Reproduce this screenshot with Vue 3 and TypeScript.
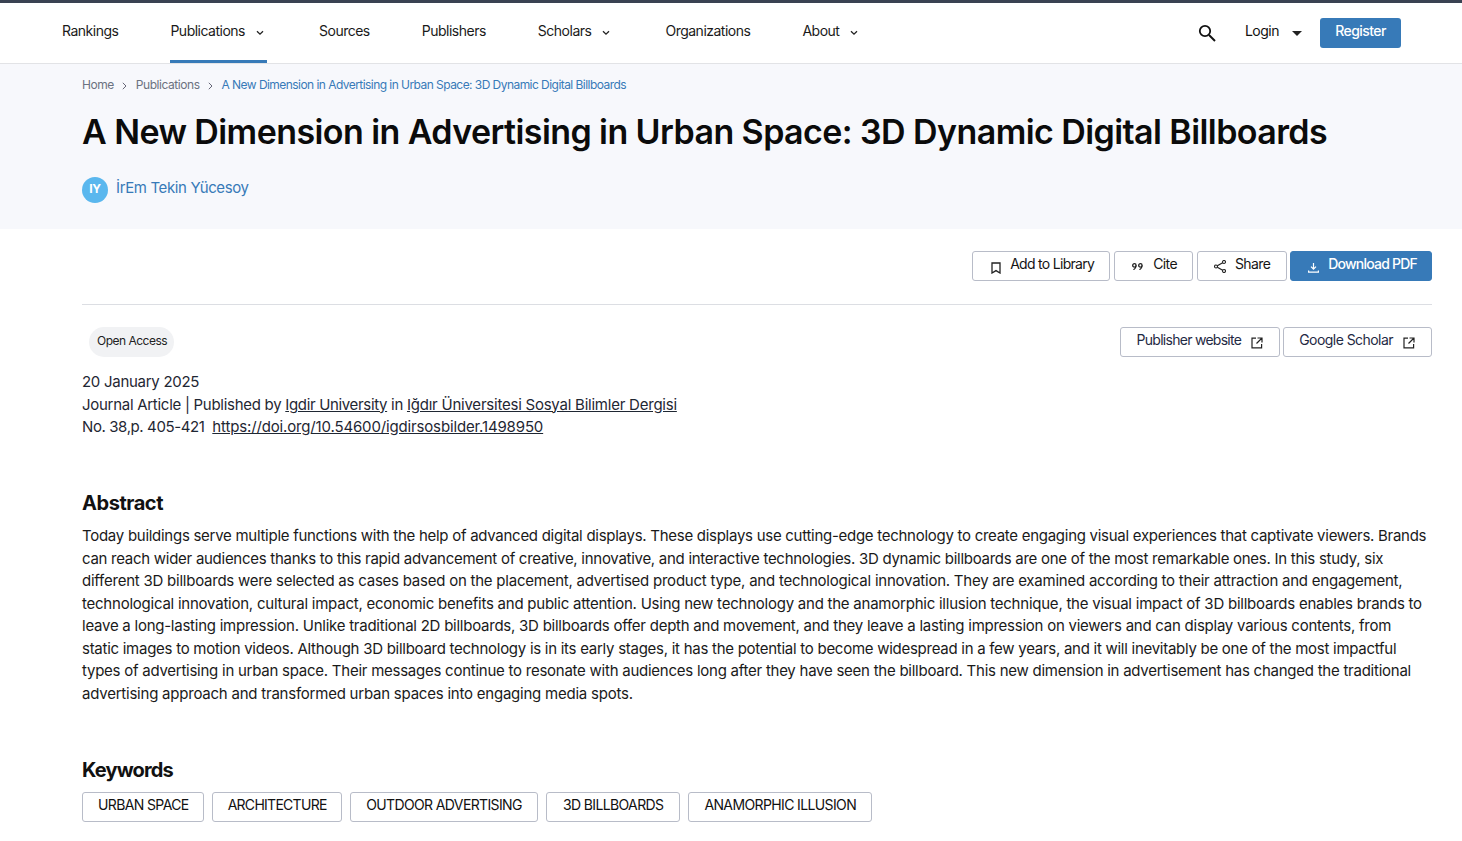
<script setup lang="ts">
const navItems = [
  { label: 'Rankings', caret: false, active: false },
  { label: 'Publications', caret: true, active: true },
  { label: 'Sources', caret: false, active: false },
  { label: 'Publishers', caret: false, active: false },
  { label: 'Scholars', caret: true, active: false },
  { label: 'Organizations', caret: false, active: false },
  { label: 'About', caret: true, active: false },
]
const keywords = ['URBAN SPACE', 'ARCHITECTURE', 'OUTDOOR ADVERTISING', '3D BILLBOARDS', 'ANAMORPHIC ILLUSION']
const abstractLines = [
  { ls: -0.276, text: 'Today buildings serve multiple functions with the help of advanced digital displays. These displays use cutting-edge technology to create engaging visual experiences that captivate viewers. Brands' },
  { ls: -0.276, text: 'can reach wider audiences thanks to this rapid advancement of creative, innovative, and interactive technologies. 3D dynamic billboards are one of the most remarkable ones. In this study, six' },
  { ls: -0.234, text: 'different 3D billboards were selected as cases based on the placement, advertised product type, and technological innovation. They are examined according to their attraction and engagement,' },
  { ls: -0.235, text: 'technological innovation, cultural impact, economic benefits and public attention. Using new technology and the anamorphic illusion technique, the visual impact of 3D billboards enables brands to' },
  { ls: -0.245, text: 'leave a long-lasting impression. Unlike traditional 2D billboards, 3D billboards offer depth and movement, and they leave a lasting impression on viewers and can display various contents, from' },
  { ls: -0.27, text: 'static images to motion videos. Although 3D billboard technology is in its early stages, it has the potential to become widespread in a few years, and it will inevitably be one of the most impactful' },
  { ls: -0.25, text: 'types of advertising in urban space. Their messages continue to resonate with audiences long after they have seen the billboard. This new dimension in advertisement has changed the traditional' },
  { ls: -0.225, text: 'advertising approach and transformed urban spaces into engaging media spots.' },
]
</script>

<template>
  <div class="page">
    <header class="header">
      <nav class="nav">
        <a v-for="item in navItems" :key="item.label" class="nav-item" :class="{ active: item.active }">
          <span>{{ item.label }}</span>
          <svg v-if="item.caret" class="chev" width="8" height="6" viewBox="0 0 8 6"><path d="M1 1.2 4 4.2 7 1.2" fill="none" stroke="#222" stroke-width="1.3" /></svg>
        </a>
      </nav>
      <div class="head-right">
        <svg class="search" width="18" height="18" viewBox="0 0 18 18"><circle cx="7" cy="7" r="5.2" fill="none" stroke="#111" stroke-width="1.8" /><path d="M11 11l6 6" stroke="#111" stroke-width="2" /></svg>
        <span class="login">Login</span>
        <svg class="login-caret" width="10" height="5" viewBox="0 0 10 5"><path d="M0 0h10L5 5z" fill="#222" /></svg>
        <button class="register">Register</button>
      </div>
    </header>

    <section class="hero">
      <div class="crumbs">
        <span>Home</span>
        <svg width="5" height="8" viewBox="0 0 5 8"><path d="M.8.8 4 4 .8 7.2" fill="none" stroke="#667" stroke-width="1" /></svg>
        <span>Publications</span>
        <svg width="5" height="8" viewBox="0 0 5 8"><path d="M.8.8 4 4 .8 7.2" fill="none" stroke="#667" stroke-width="1" /></svg>
        <span class="crumb-current">A New Dimension in Advertising in Urban Space: 3D Dynamic Digital Billboards</span>
      </div>
      <h1>A New Dimension in Advertising in Urban Space: 3D Dynamic Digital Billboards</h1>
      <div class="author">
        <span class="avatar">IY</span>
        <span class="author-name">İrEm Tekin Yücesoy</span>
      </div>
    </section>

    <main class="main">
      <div class="actions">
        <button class="btn btn-lib">
          <svg width="10" height="12" viewBox="0 0 10 12"><path d="M1 1h8v10L5 8.6 1 11z" fill="none" stroke="#222" stroke-width="1.3" /></svg>
          Add to Library
        </button>
        <button class="btn btn-cite">
          <svg width="11" height="7" viewBox="0 0 11 7"><circle cx="2.4" cy="2.4" r="1.7" fill="none" stroke="#222" stroke-width="1.3" /><circle cx="8.4" cy="2.4" r="1.7" fill="none" stroke="#222" stroke-width="1.3" /><path d="M4 2.6C4 4.6 3.2 6 1.4 6.7M10 2.6C10 4.6 9.2 6 7.4 6.7" fill="none" stroke="#222" stroke-width="1.2" /></svg>
          Cite
        </button>
        <button class="btn btn-share">
          <svg width="12" height="13" viewBox="0 0 12 13"><path d="M10 2 2 6.5l8 4.5" fill="none" stroke="#222" stroke-width="1.2" /><circle cx="10" cy="2" r="1.5" fill="#fff" stroke="#222" stroke-width="1.1" /><circle cx="2" cy="6.5" r="1.5" fill="#fff" stroke="#222" stroke-width="1.1" /><circle cx="10" cy="11" r="1.5" fill="#fff" stroke="#222" stroke-width="1.1" /></svg>
          Share
        </button>
        <button class="btn btn-pdf">
          <svg width="11" height="10" viewBox="0 0 11 10"><path d="M5.5 0v6M3 3.6l2.5 2.6L8 3.6M.6 7.4v1.8h9.8V7.4" fill="none" stroke="#fff" stroke-width="1.2" /></svg>
          Download PDF
        </button>
      </div>

      <div class="meta-row">
        <span class="pill">Open Access</span>
        <div class="links">
          <a class="btn link-btn link-pub">Publisher website
            <svg width="12" height="12" viewBox="0 0 12 12"><path d="M5 1.2H1v9.6h9.6V7M6.5 1H11v4.5M11 1 5.5 6.5" fill="none" stroke="#222" stroke-width="1.2" /></svg>
          </a>
          <a class="btn link-btn link-gs">Google Scholar
            <svg width="12" height="12" viewBox="0 0 12 12"><path d="M5 1.2H1v9.6h9.6V7M6.5 1H11v4.5M11 1 5.5 6.5" fill="none" stroke="#222" stroke-width="1.2" /></svg>
          </a>
        </div>
      </div>

      <div class="details">
        <div>20 January 2025</div>
        <div>Journal Article | Published by <a class="pub">Igdir University</a> in <a class="jour">Iğdır Üniversitesi Sosyal Bilimler Dergisi</a></div>
        <div><span class="issue">No. 38,p. 405-421</span> &nbsp;<a class="doi">https://doi.org/10.54600/igdirsosbilder.1498950</a></div>
      </div>

      <h2 class="abstract-title">Abstract</h2>
      <p class="abstract">
        <span v-for="line in abstractLines" :key="line.text" class="line" :style="{ letterSpacing: line.ls + 'px' }">{{ line.text }}</span>
      </p>

      <h2 class="kw-title">Keywords</h2>
      <div class="keywords">
        <span v-for="k in keywords" :key="k" class="kw">{{ k }}</span>
      </div>
    </main>
  </div>
</template>

<style scoped>
.page { font-family: Inter, "Liberation Sans", sans-serif; color: #111; background: #fff; height: 841px; overflow: hidden; }
.header { height: 60px; border-top: 3px solid #3a4252; border-bottom: 1px solid #e2e3e6; display: flex; justify-content: space-between; padding: 0 61px 0 62px; }
.nav { display: flex; gap: 52px; }
.nav-item { display: flex; align-items: flex-start; padding-top: 19px; font-size: 14px; letter-spacing: -0.5px; line-height: 17px; color: #1a1a1a; box-sizing: border-box; border-bottom: 3px solid transparent; height: 60px; }
.nav-item.active { border-bottom-color: #377ab8; }
.chev { margin: 8px 3px 0 11px; }
.head-right { display: flex; align-items: flex-start; }
.search { margin: 21px 0 0; }
.login { margin: 19px 0 0 29px; font-size: 14px; letter-spacing: -0.5px; line-height: 17px; }
.login-caret { margin: 28px 0 0 13px; }
.register { margin: 15px 0 0 18px; width: 81px; height: 30px; border: 0; border-radius: 3px; background: #377ab8; color: #fff; font: 500 14px/1 Inter, sans-serif; letter-spacing: -0.55px; padding: 0 0 4px; }

.hero { height: 165px; background: #f7f8fc; padding: 0 82px; box-sizing: border-box; }
.crumbs { display: flex; align-items: center; padding-top: 13px; height: 15px; font-size: 12px; letter-spacing: -0.45px; color: #6b7280; }
.crumbs svg { margin: 3px 8.5px 0 8.5px; }
.crumb-current { color: #377ab8; letter-spacing: -0.55px; }
h1 { margin: 19px 0 0; font-size: 34px; font-weight: 600; line-height: 42px; letter-spacing: -0.58px; color: #0b0b0b; white-space: nowrap; }
.author { display: flex; align-items: flex-start; margin-top: 24px; }
.avatar { width: 26px; height: 26px; border-radius: 50%; background: #5ab7ee; color: #fff; font-size: 12px; font-weight: 700; letter-spacing: -0.3px; display: flex; align-items: center; justify-content: center; padding-bottom: 4px; box-sizing: border-box; }
.author-name { margin-left: 8px; font-size: 15px; line-height: 18px; margin-top: 2px; letter-spacing: -0.37px; color: #377ab8; }

.main { padding: 22px 30px 0 82px; }
.actions { display: flex; justify-content: flex-end; padding-bottom: 23px; border-bottom: 1px solid #dcdee3; }
.btn { display: inline-flex; align-items: center; box-sizing: border-box; height: 30px; background: #fff; border: 1px solid #b8bcc8; border-radius: 3px; font: 400 14px/1 Inter, sans-serif; letter-spacing: -0.62px; color: #151515; padding: 0 14px 4px 17px; }
.btn svg { margin-right: 9px; margin-top: 7px; }
.btn-lib { margin-right: 4px; padding: 0 15px 4px 18px; letter-spacing: -0.7px; }
.btn-cite { margin-right: 4px; padding-right: 15px; }
.btn-cite svg { margin-top: 5px; margin-right: 10px; }
.btn-share { margin-right: 3px; padding: 0 16px 4px 16px; }
.btn-share svg { margin-top: 5px; }
.btn-pdf { background: #377ab8; border-color: #377ab8; color: #fff; font-weight: 500; letter-spacing: -0.78px; }
.meta-row { display: flex; justify-content: space-between; align-items: flex-start; margin-top: 22px; }
.pill { margin-left: 7px; height: 30px; padding: 0 7px 4px 8px; border-radius: 15px; background: #f1f2f4; font-size: 12px; letter-spacing: -0.5px; display: flex; align-items: center; box-sizing: border-box; color: #222; }
.links { display: flex; gap: 3px; }
.link-btn { color: #1f2a44; padding: 0 16px 4px 15px; }
.link-pub { letter-spacing: -0.72px; padding-left: 16px; }
.link-gs { letter-spacing: -0.55px; }
.link-btn svg { margin: 6px 0 0 10px; }
.details { margin-top: 14px; font-size: 15px; line-height: 22.5px; letter-spacing: -0.28px; color: #1f2733; }
.details a { text-decoration: underline; }
.details .pub { letter-spacing: -0.34px; }
.details .jour { letter-spacing: -0.23px; }
.details .issue { letter-spacing: -0.4px; }
.details .doi { letter-spacing: -0.15px; }
.abstract-title { margin: 52px 0 0; font-size: 20px; font-weight: 700; line-height: 24px; letter-spacing: -0.45px; }
.abstract { margin: 10.5px 0 0; font-size: 15px; line-height: 22.5px; color: #1a1a1a; }
.line { display: block; white-space: nowrap; }
.kw-title { margin: 52.5px 0 0; font-size: 20px; font-weight: 700; line-height: 24px; letter-spacing: -0.85px; }
.keywords { display: flex; gap: 8px; margin-top: 10px; }
.kw { height: 30px; box-sizing: border-box; border: 1px solid #b8bcc8; border-radius: 3px; padding: 0 15px 4px; display: flex; align-items: center; font-size: 14px; letter-spacing: -0.62px; color: #111; }
.kw:nth-child(1) { padding-right: 14px; }
.kw:nth-child(2) { padding-right: 14.5px; letter-spacing: -0.72px; }
.kw:nth-child(4) { padding: 0 16px 4px; }
</style>

<style>
body { margin: 0; }
</style>
